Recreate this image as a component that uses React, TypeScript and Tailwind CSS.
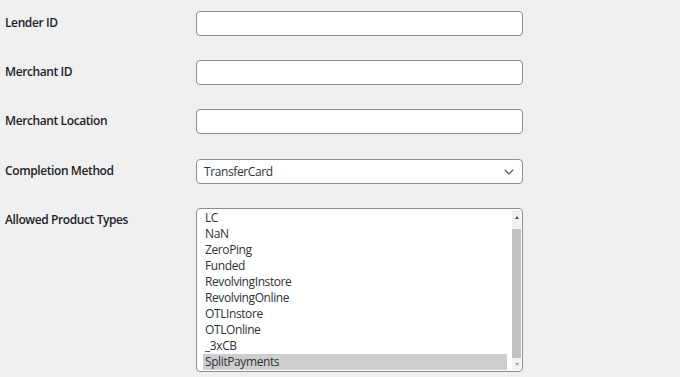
import { ChevronDown } from "lucide-react";

const productTypes = [
  "LC",
  "NaN",
  "ZeroPing",
  "Funded",
  "RevolvingInstore",
  "RevolvingOnline",
  "OTLInstore",
  "OTLOnline",
  "_3xCB",
  "SplitPayments",
];

function Label({ children }: { children: React.ReactNode }) {
  return (
    <div className="w-[191px] shrink-0 pt-[4px] text-[12px] font-semibold leading-[16px] tracking-[-0.4px] text-[#1d2327]">
      {children}
    </div>
  );
}

function TextInput() {
  return (
    <input
      type="text"
      className="h-[25px] w-[327px] rounded-[4px] border border-[#8c8f94] bg-white px-2 text-[13px] outline-none"
    />
  );
}

export default function App() {
  return (
    <div
      className="min-h-screen bg-[#f0f0f1] pl-[5px] pt-[11px]"
      style={{ fontFamily: '"Open Sans", "Noto Sans", sans-serif' }}
    >
      <div className="flex h-[49px] items-start">
        <Label>Lender ID</Label>
        <TextInput />
      </div>
      <div className="flex h-[49px] items-start">
        <Label>Merchant ID</Label>
        <TextInput />
      </div>
      <div className="flex h-[50px] items-start">
        <Label>Merchant Location</Label>
        <TextInput />
      </div>
      <div className="flex h-[49px] items-start">
        <Label>Completion Method</Label>
        <div className="flex h-[25px] w-[327px] items-center justify-between rounded-[4px] border border-[#8c8f94] bg-white pl-[7px] pr-[5px] text-[12px] tracking-[-0.4px] text-[#2c3338]">
          <span>TransferCard</span>
          <ChevronDown className="h-[16px] w-[16px] text-[#50575e]" strokeWidth={1.6} />
        </div>
      </div>
      <div className="flex items-start">
        <Label>Allowed Product Types</Label>
        <div className="flex h-[164px] w-[327px] rounded-[4px] border border-[#8c8f94] bg-white">
          <ul className="flex-1 pl-[6px] pr-[5px] pt-[1px] text-[12px] leading-[16px] tracking-[-0.4px] text-[#2c3338]">
            {productTypes.map((t) => (
              <li
                key={t}
                className={
                  t === "SplitPayments" ? "bg-[#cecece] px-[2px]" : "px-[2px]"
                }
              >
                {t}
              </li>
            ))}
          </ul>
          <div className="my-[1px] mr-[1px] flex w-[9px] flex-col items-center bg-[#f1f1f1]">
            <div className="flex h-[14px] w-full items-center justify-center">
              <div className="h-0 w-0 border-x-[2px] border-b-[3px] border-x-transparent border-b-[#505050]" />
            </div>
            <div className="mt-[5px] w-full flex-1 bg-[#c1c1c1]" />
            <div className="flex h-[12px] w-full items-center justify-center">
              <div className="h-0 w-0 border-x-[2px] border-t-[3px] border-x-transparent border-t-[#a3a3a3]" />
            </div>
          </div>
        </div>
      </div>
    </div>
  );
}
